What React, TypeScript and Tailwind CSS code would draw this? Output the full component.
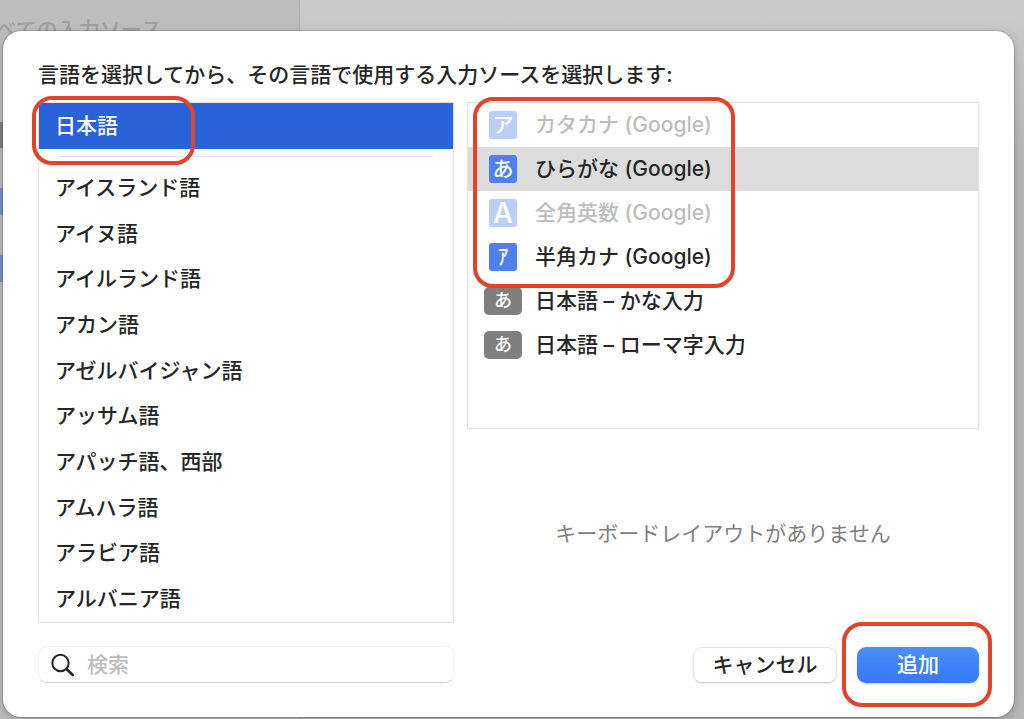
import React from 'react';
import clsx from 'clsx';

interface InputSource {
    label: string;
    glyph: string;
    kind: 'google' | 'system';
    disabled?: boolean;
    selected?: boolean;
}

const languages = [
    'アイスランド語',
    'アイヌ語',
    'アイルランド語',
    'アカン語',
    'アゼルバイジャン語',
    'アッサム語',
    'アパッチ語、西部',
    'アムハラ語',
    'アラビア語',
    'アルバニア語',
];

const inputSources: InputSource[] = [
    { label: 'カタカナ (Google)', glyph: 'ア', kind: 'google', disabled: true },
    { label: 'ひらがな (Google)', glyph: 'あ', kind: 'google', selected: true },
    { label: '全角英数 (Google)', glyph: 'A', kind: 'google', disabled: true },
    { label: '半角カナ (Google)', glyph: 'ｱ', kind: 'google' },
    { label: '日本語 – かな入力', glyph: 'あ', kind: 'system' },
    { label: '日本語 – ローマ字入力', glyph: 'あ', kind: 'system' },
];

// Red marker drawn over the part the reader should look at
const Highlight: React.FC<{ className: string }> = ({ className }) => (
    <div className={clsx('absolute z-10 border-4 border-[#e2432a] pointer-events-none', className)}></div>
);

const Backdrop: React.FC = () => (
    <div className="absolute inset-0 overflow-hidden bg-linear-to-b from-[#cbcbcb] to-[#b8b8b8] to-[160px]" aria-hidden="true">
        <div className="w-[300px] h-full bg-[#bdbdbd] border-r border-[#b0b0b0] pt-[15px]">
            <p className="-ml-6 text-[21px] leading-[30px] text-[#a0a0a0] whitespace-nowrap">すべての入力ソース</p>
            <div className="mt-[77px] w-3 h-[26px] bg-[#808080]"></div>
            <div className="mt-10 w-3 h-[27px] bg-[#7c92c8]"></div>
            <div className="mt-10 w-3 h-[27px] bg-[#7c92c8]"></div>
        </div>
    </div>
);

const SourceIcon: React.FC<{ source: InputSource }> = ({ source }) => (
    <span className="w-[38px] shrink-0 flex justify-center" aria-hidden="true">
        <span
            className={clsx(
                'h-7 flex items-center justify-center text-white font-medium',
                source.kind === 'system' && 'w-full rounded-[5px] bg-[#7f7f7f] text-lg',
                source.kind === 'google' && 'w-7 rounded-[3px]',
                source.kind === 'google' && (source.glyph === 'A' ? 'text-[28px]' : 'text-[21px]'),
                source.kind === 'google' && (source.disabled ? 'bg-[#bccdf8]' : 'bg-[#4f80ec]')
            )}
        >
            {source.glyph}
        </span>
    </span>
);

const LanguageList: React.FC = () => (
    <div className="relative h-[521px] flex flex-col border border-[#e2e2e2]">
        <button type="button" aria-pressed="true" className="h-[46px] shrink-0 px-4 text-left text-white bg-[#2962d9]">
            日本語
        </button>
        <div className="mt-[7px] mb-2 mx-5 h-px shrink-0 bg-[#e2e2e2]"></div>
        <ul className="flex-1 flex flex-col">
            {languages.map((language) => (
                <li key={language} className="flex-1 flex">
                    <button type="button" className="flex-1 px-4 text-left">{language}</button>
                </li>
            ))}
        </ul>
        <Highlight className="-left-[7px] -top-[7px] w-[163px] h-[69px] rounded-[20px]" />
    </div>
);

const SourceList: React.FC = () => (
    <div className="relative h-[327px] border border-[#e2e2e2]">
        <ul>
            {inputSources.map((source) => (
                <li key={source.label}>
                    <button
                        type="button"
                        disabled={source.disabled}
                        aria-pressed={!!source.selected}
                        className={clsx(
                            'w-full h-11 pl-4 flex items-center gap-[13px] text-left',
                            source.selected && 'bg-[#dcdcdc]',
                            source.disabled && 'text-[#bdbdbd]'
                        )}
                    >
                        <SourceIcon source={source} />
                        {source.label}
                    </button>
                </li>
            ))}
        </ul>
        <Highlight className="left-[5px] -top-[6px] w-[262px] h-[191px] rounded-[20px]" />
    </div>
);

const App: React.FC = () => {
    return (
        <div
            lang="ja"
            className="relative min-h-screen pt-[31px] pb-[2px] pl-[3px] pr-[10px] text-[21px] leading-[30px] font-medium text-[#262626] font-['Inter','Noto_Sans_CJK_JP',sans-serif]"
        >
            <Backdrop />

            <main className="relative px-[35px] pt-[29px] pb-[34px] rounded-[18px] bg-white shadow-[0_0_0_1px_rgba(0,0,0,0.15),0_4px_12px_0_rgba(0,0,0,0.2)]">
                <h1>言語を選択してから、その言語で使用する入力ソースを選択します:</h1>

                <div className="mt-3 grid grid-cols-[416fr_512fr] gap-[13px]">
                    <LanguageList />
                    <div className="flex flex-col">
                        <SourceList />
                        <p className="flex-1 flex items-center justify-center pt-4 font-normal text-[#808080]">
                            キーボードレイアウトがありません
                        </p>
                    </div>
                </div>

                {/* Footer */}
                <div className="mt-[23px] grid grid-cols-[416fr_512fr] gap-[13px]">
                    <label className="h-[37px] px-3 flex items-center gap-3 rounded-[9px] border border-[#f0f0f0] border-b-[#cfcfcf]">
                        <svg className="w-6 h-6 shrink-0" viewBox="0 0 24 24" fill="none" stroke="#262626" strokeLinecap="round" aria-hidden="true">
                            <circle cx="9.5" cy="10" r="8.2" strokeWidth="2" />
                            <path d="M15.6 16.2 L21.8 22" strokeWidth="2.6" />
                        </svg>
                        <input
                            type="search"
                            aria-label="検索"
                            placeholder="検索"
                            className="flex-1 min-w-0 bg-transparent outline-none placeholder:text-[#bdbdbd]"
                        />
                    </label>
                    <div className="flex justify-end items-end gap-5">
                        <button
                            type="button"
                            className="w-[144px] h-9 rounded-[9px] bg-white border border-[#e2e2e2] border-b-[#cfcfcf] shadow-[0_1px_1px_0_rgba(0,0,0,0.08)]"
                        >
                            キャンセル
                        </button>
                        <div className="relative flex">
                            <button
                                type="button"
                                className="w-[122px] h-9 rounded-[9px] text-white bg-linear-to-b from-[#4b8ff8] to-[#3478f6] shadow-[0_1px_2px_0_rgba(52,120,246,0.3)]"
                            >
                                追加
                            </button>
                            <Highlight className="-left-[15px] -top-[25px] w-[150px] h-[85px] rounded-[20px]" />
                        </div>
                    </div>
                </div>
            </main>
        </div>
    );
};

export default App;
